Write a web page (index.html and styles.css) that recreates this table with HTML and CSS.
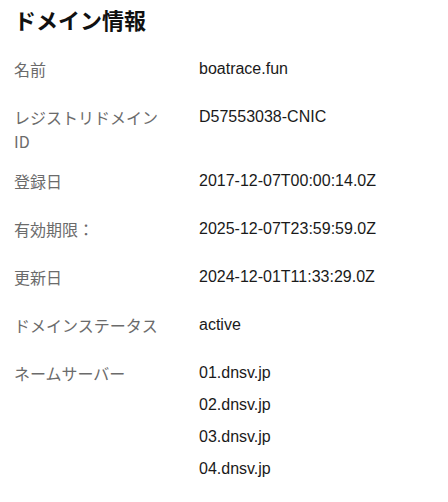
FILE: index.html
```html
<!DOCTYPE html>
<html lang="ja">
<head>
<meta charset="utf-8">
<link rel="stylesheet" href="styles.css">
</head>
<body>
<section class="panel">
  <h2 class="title">ドメイン情報</h2>
  <dl class="info">
    <div class="row"><dt>名前</dt><dd><div class="val">boatrace.fun</div></dd></div>
    <div class="row"><dt>レジストリドメインID</dt><dd><div class="val">D57553038-CNIC</div></dd></div>
    <div class="row"><dt>登録日</dt><dd><div class="val">2017-12-07T00:00:14.0Z</div></dd></div>
    <div class="row"><dt>有効期限：</dt><dd><div class="val">2025-12-07T23:59:59.0Z</div></dd></div>
    <div class="row"><dt>更新日</dt><dd><div class="val">2024-12-01T11:33:29.0Z</div></dd></div>
    <div class="row"><dt>ドメインステータス</dt><dd><div class="val">active</div></dd></div>
    <div class="row"><dt>ネームサーバー</dt><dd><div class="val">01.dnsv.jp</div><div class="val">02.dnsv.jp</div><div class="val">03.dnsv.jp</div><div class="val">04.dnsv.jp</div></dd></div>
  </dl>
</section>
</body>
</html>
```
FILE: styles.css
```css
html, body { margin: 0; padding: 0; background: #fff; }
body { font-family: "Noto Sans CJK JP", "Noto Sans", sans-serif; color: #1a1a1a; }
.panel { padding: 3px 14px 0 14px; }
.title { margin: 0; font-size: 22px; line-height: 32px; font-weight: 700; color: #111; }
.info { margin: 22px 0 0 0; display: flex; flex-direction: column; gap: 16px; }
.row { display: flex; align-items: flex-start; }
.row dt { width: 150px; flex: none; margin: 0; font-size: 16px; line-height: 24px; color: #6b6b6b; }
.row dd { margin: 0 0 0 35px; font-family: "Liberation Sans", Arial, sans-serif; font-size: 16px; color: #1a1a1a; }
.val { line-height: 24px; margin-bottom: 8px; }
```
